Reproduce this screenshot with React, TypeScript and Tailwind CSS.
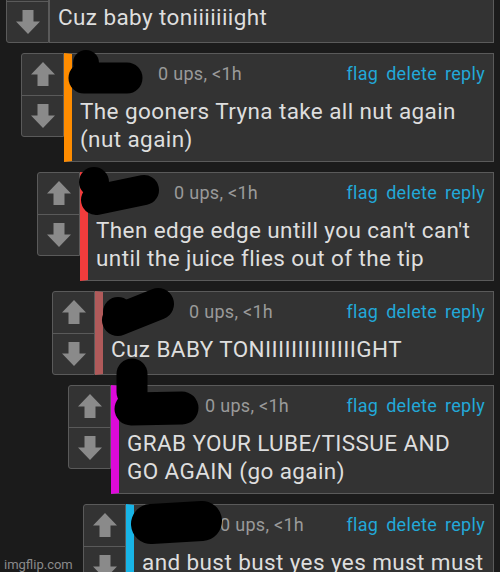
import React from "react";

type Comment = {
  indent: string;
  bar: string;
  lines: string[];
  extra?: string;
};

const comments: Comment[] = [
  { indent: "ml-[6px]", bar: "border-l border-l-[#5a5a5a]", lines: ["Cuz baby toniiiiiiight"], extra: "-mt-[41px]" },
  { indent: "ml-[21px]", bar: "border-l-[8px] border-l-[#ff8c00]", lines: ["The gooners Tryna take all nut again", "(nut again)"] },
  { indent: "ml-[37px]", bar: "border-l-[8px] border-l-[#f23c3c]", lines: ["Then edge edge untill you can't can't", "until the juice flies out of the tip"] },
  { indent: "ml-[52px]", bar: "border-l-[8px] border-l-[#b05a5a]", lines: ["Cuz BABY TONIIIIIIIIIIIIIIGHT"] },
  { indent: "ml-[68px]", bar: "border-l-[8px] border-l-[#dc0ad8]", lines: ["GRAB YOUR LUBE/TISSUE AND", "GO AGAIN (go again)"] },
  { indent: "ml-[83px]", bar: "border-l-[8px] border-l-[#18b4e6]", lines: ["and bust bust yes yes must must", "yes yes"] },
];

function Arrow({ down }: { down?: boolean }) {
  return (
    <svg width="24" height="24" viewBox="0 0 24 24" className={down ? "rotate-180" : ""}>
      <path d="M12 0 L24 12.5 L17.5 12.5 L17.5 24 L6.5 24 L6.5 12.5 L0 12.5 Z" fill="#8a8a8a" />
    </svg>
  );
}

function VoteBox() {
  return (
    <div className="w-[43px] h-[84px] shrink-0 flex flex-col border border-[#5a5a5a] rounded-l-[3px] bg-[#333]">
      <div className="flex-1 flex items-center justify-center border-b border-[#5a5a5a]">
        <Arrow />
      </div>
      <div className="flex-1 flex items-center justify-center">
        <Arrow down />
      </div>
    </div>
  );
}

function CommentRow({ c }: { c: Comment }) {
  return (
    <div className={`flex items-start mr-[6px] ${c.indent} ${c.extra ?? ""}`}>
      <VoteBox />
      <div className={`flex-1 min-h-[84px] bg-[#333] border-y border-r border-[#5a5a5a] ${c.bar} pt-[7px] pb-[8px] pl-[8px] pr-[8px]`}>
        <div className="flex items-center h-[26px] leading-[26px] text-[18px] tracking-[0.3px]">
          <span className="w-[78px] shrink-0" />
          <span className="text-[#9a9a9a]">0 ups, &lt;1h</span>
          <span className="ml-auto flex gap-[8px] text-[#22a8d8]">
            <span>flag</span>
            <span>delete</span>
            <span>reply</span>
          </span>
        </div>
        <div className="mt-[10px] text-[22.5px] tracking-[0.4px] leading-[28px] text-[#dedede] whitespace-nowrap">
          {c.lines.map((l, i) => (
            <div key={i}>{l}</div>
          ))}
        </div>
      </div>
    </div>
  );
}

export default function App() {
  return (
    <div className="relative w-[500px] h-[572px] overflow-hidden bg-[#1b1b1b] font-['Roboto',sans-serif]">
      <div className="flex flex-col gap-[10px]">
        {comments.map((c, i) => (
          <CommentRow key={i} c={c} />
        ))}
      </div>

      {/* scribbled-out usernames */}
      <svg className="absolute inset-0 pointer-events-none" width="500" height="572">
        <g stroke="#000" strokeLinecap="round" fill="#000">
          <circle cx="86" cy="63" r="13" stroke="none" />
          <line x1="84" y1="78" x2="127" y2="78" strokeWidth="31" />

          <circle cx="94" cy="182" r="15" stroke="none" />
          <line x1="96" y1="200" x2="144" y2="190" strokeWidth="30" />

          <line x1="118" y1="320" x2="158" y2="304" strokeWidth="32" />
          <circle cx="118" cy="312" r="15" stroke="none" />
          <line x1="132" y1="374" x2="132" y2="392" strokeWidth="31" />
          <line x1="131" y1="409" x2="182" y2="408" strokeWidth="33" />

          <line x1="151" y1="524" x2="202" y2="521" strokeWidth="40" />
        </g>
      </svg>

      <div className="absolute left-[4px] top-[555px] text-[13px] text-[#8a8a8a] font-['Roboto',sans-serif]">
        imgflip.com
      </div>
    </div>
  );
}
